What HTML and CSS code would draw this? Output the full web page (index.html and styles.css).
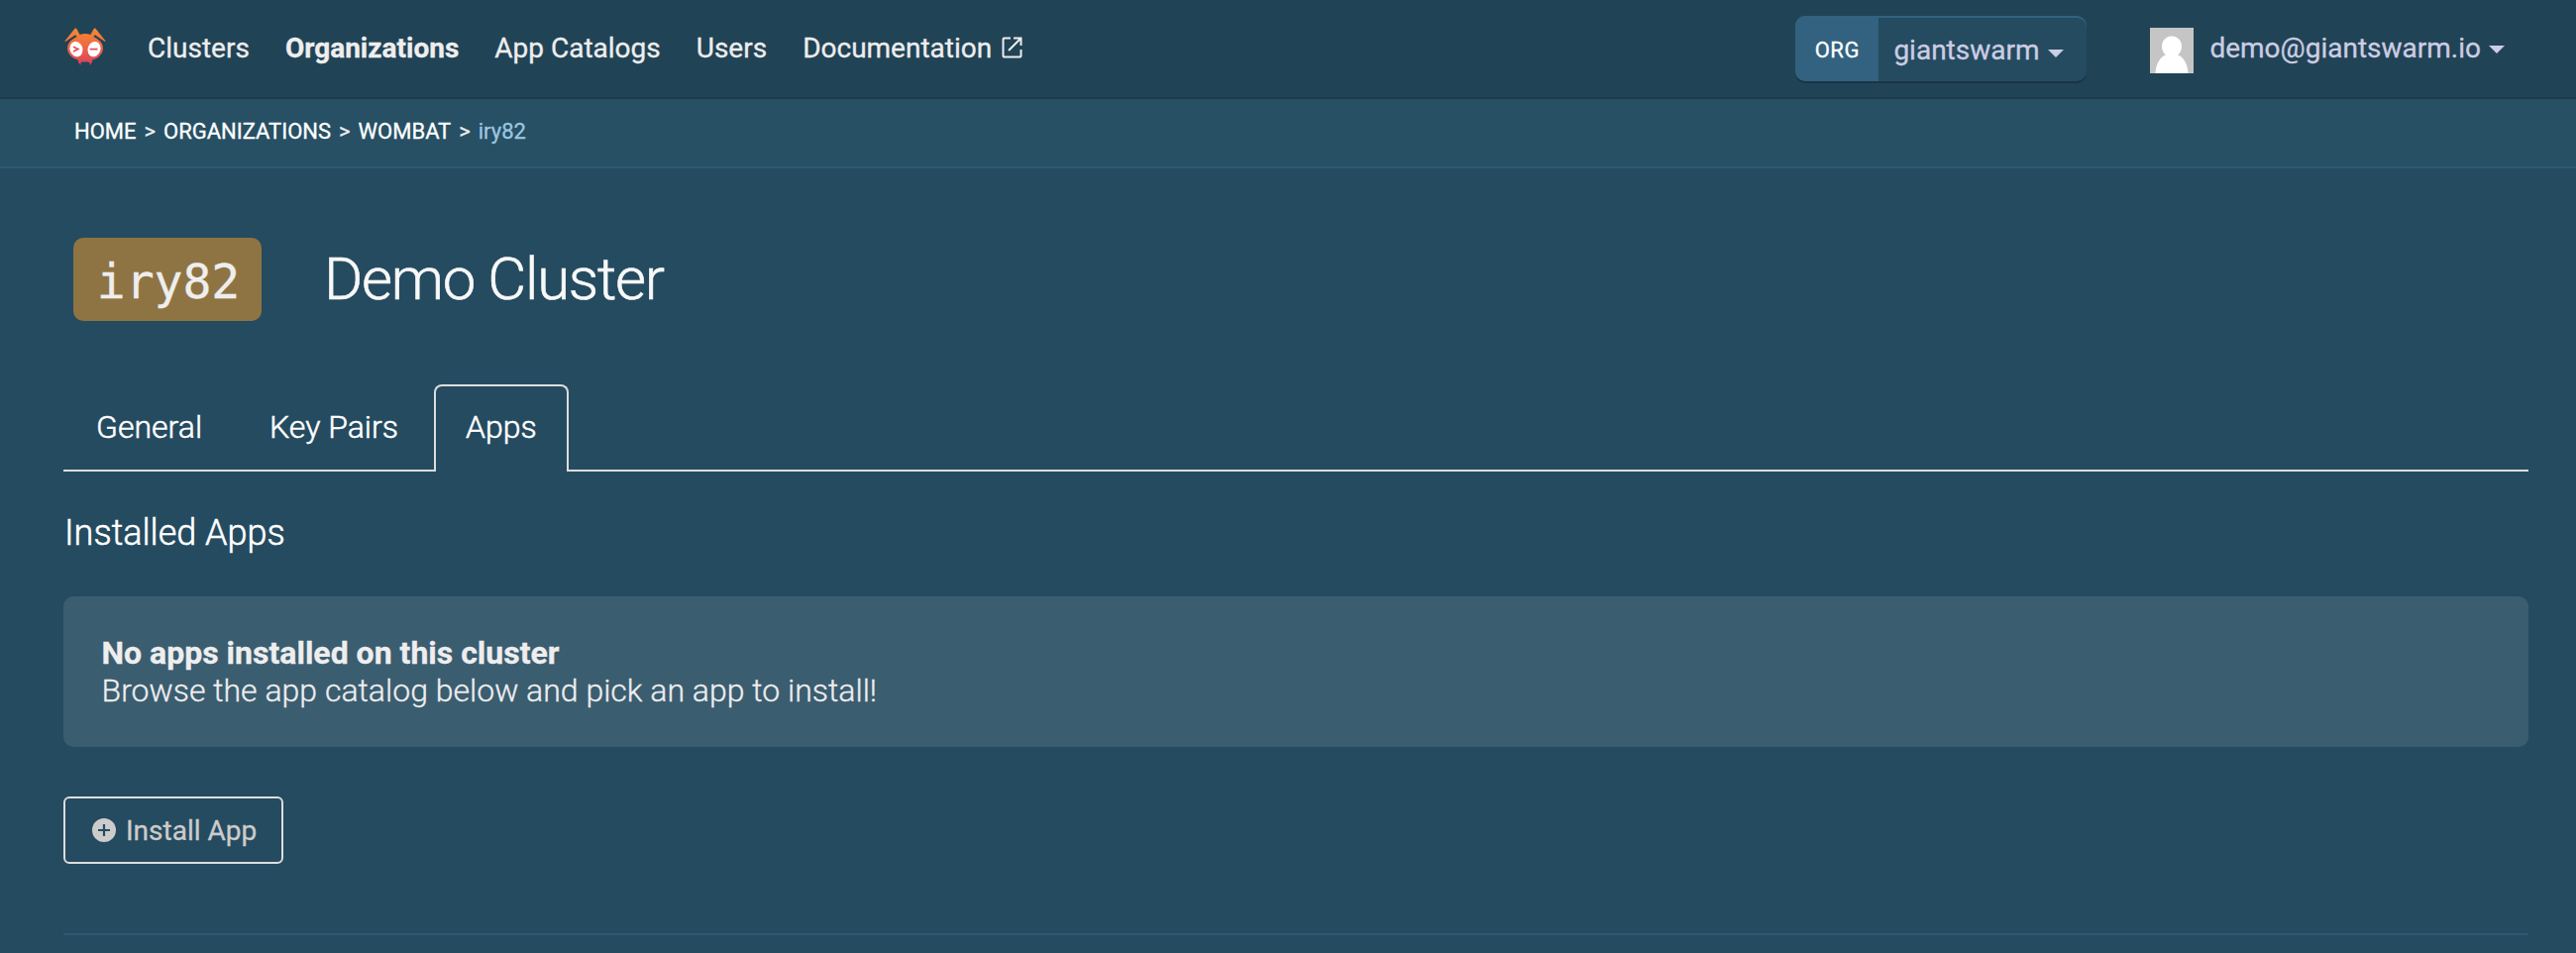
FILE: index.html
```html
<!DOCTYPE html>
<html lang="en">
<head>
<meta charset="utf-8">
<title>Demo Cluster</title>
<link rel="stylesheet" href="styles.css">
</head>
<body>
<header class="topbar">
  <svg class="logo" viewBox="0 0 42 38">
    <defs>
      <linearGradient id="ant" x1="0" y1="0" x2="0" y2="1">
        <stop offset="0" stop-color="#f68a2c"/>
        <stop offset=".45" stop-color="#ee6b45"/>
        <stop offset="1" stop-color="#d9405f"/>
      </linearGradient>
    </defs>
    <path fill="url(#ant)" d="M.3 13.6 10.8.6Q11.8 0 12.3 1L15.6 6.9Q21 5 26.400 6.900L29.700 1Q30.200 0 31.200.600L41.700 13.600 40.800 13.900 31 7.300 29.300 9Q39 13.500 39 20.500C39 27 33.500 31.200 28.500 32.300Q28.200 35.500 26 37.600Q25 37.700 25.600 35.300L23.500 34.400H18.500L16.400 35.300Q17 37.700 16 37.600Q13.800 35.500 13.500 32.300C8.500 31.200 3 27 3 20.500Q3 13.500 12.700 9L11 7.300 1.200 13.900Z"/>
    <ellipse cx="12" cy="21.600" rx="6.400" ry="7.800" fill="#fff" transform="rotate(-18 12 21.600)"/>
    <ellipse cx="30" cy="21.600" rx="6.400" ry="7.800" fill="#fff" transform="rotate(18 30 21.600)"/>
    <path d="M9 19.300 13.700 21.500 9 23.900M25.700 21.600h7.800" fill="none" stroke="#e14f57" stroke-width="1.700"/>
  </svg>
  <nav class="nav">
    <a>Clusters</a>
    <a class="current">Organizations</a>
    <a>App Catalogs</a>
    <a>Users</a>
    <a class="docs">Documentation
      <svg class="ext" viewBox="0 0 22 22" fill="none" stroke="#eee" stroke-width="2"><path d="M9 1.500H2.500Q1.500 1.500 1.500 2.500V19.500Q1.500 20.500 2.500 20.500H18.500Q19.500 20.500 19.500 19.500V13M12 1.500H19.500V9M19.500 1.500 7 14"/></svg>
    </a>
  </nav>
  <div class="org">
    <span class="org-tag">ORG</span>
    <span class="org-name">giantswarm<i class="caret"></i></span>
  </div>
  <div class="user">
    <svg class="avatar" viewBox="0 0 44 46"><path fill="#c5c5c5" d="M0 0h44v46H0z"/><path fill="#fff" d="M5.500 46C6 36 10.500 29.500 16 27.300A10 10.500 0 1 1 28 27.300C33.500 29.500 38 36 38.500 46Z"/></svg>
    <span class="email">demo@giantswarm.io</span><i class="caret"></i>
  </div>
</header>
<div class="crumbs">
  <a>HOME</a><span>&gt;</span><a>ORGANIZATIONS</a><span>&gt;</span><a>WOMBAT</a><span>&gt;</span><b>iry82</b>
</div>
<main class="page">
  <div class="title">
    <span class="badge">iry82</span>
    <h1>Demo Cluster</h1>
  </div>
  <div class="tabs">
    <a class="tab general">General</a>
    <a class="tab pairs">Key Pairs</a>
    <a class="tab active">Apps</a>
    <span class="rest"></span>
  </div>
  <h2>Installed Apps</h2>
  <section class="empty">
    <strong>No apps installed on this cluster</strong>
    <p>Browse the app catalog below and pick an app to install!</p>
  </section>
  <button class="install">
    <svg viewBox="0 0 24 24"><circle cx="12" cy="12" r="12" fill="#ccc"/><path d="M12 6v12M6 12h12" stroke="#254b60" stroke-width="2.200"/></svg>
    <span>Install App</span>
  </button>
  <hr>
</main>
</body>
</html>
```
FILE: styles.css
```css
* { box-sizing: border-box; }
body { margin: 0; height: 962px; overflow: hidden; background: #254b60; color: #eee; font-family: Roboto, "Liberation Sans", sans-serif; font-size: 28px; font-weight: 400; -webkit-text-stroke: .3px currentColor; }
a, span, b, strong { white-space: nowrap; }

.topbar { display: flex; align-items: flex-start; height: 100px; padding: 0 72px 0 65px; background: #214356; border-bottom: 2px solid #1e3c4e; }
.logo { width: 42px; height: 38px; margin-top: 28px; }
.nav { display: flex; gap: 36px; margin: 32px auto 0 42px; line-height: 33px; }
.current { font-weight: 700; }
.docs { display: flex; gap: 10px; }
.ext { width: 22px; height: 22px; margin-top: 5px; }

.org { display: flex; width: 294px; height: 66px; margin: 16px 64px 0 0; border-radius: 10px; background: #254b60; overflow: hidden; box-shadow: 0 2px 0 #1a3445, inset 0 2px 0 #32627f; }
.org-tag { width: 84px; background: #32627f; color: #fff; font-size: 22px; line-height: 69px; text-align: center; letter-spacing: .6px; }
.org-name { display: flex; padding-left: 15px; line-height: 70px; color: #cccde2; }
.caret { width: 0; height: 0; border: 8px solid transparent; border-top-color: #cccde2; border-bottom: 0; margin: 34px 0 0 8px; }

.user { display: flex; color: #cccde2; }
.avatar { width: 44px; height: 46px; margin: 28px 16px 0 0; }
.email { line-height: 33px; margin-top: 32px; }
.user .caret { margin-top: 46px; }

.crumbs { display: flex; height: 70px; padding-left: 75px; background: #275065; border-bottom: 2px solid #2c5972; font-size: 22px; line-height: 66px; color: #fff; }
.crumbs span { margin: 0 8px; font-size: 22px; color: #eee; }
.crumbs b { font-weight: 400; color: #9ec6e0; }

.page { padding: 70px 48px 0 64px; }
.title { display: flex; height: 84px; padding-left: 10px; }
.badge { width: 190px; padding-left: 2px; border-radius: 10px; background: #8f7443; font-family: "DejaVu Sans Mono", monospace; font-size: 48px; line-height: 88px; text-align: center; }
h1 { margin: 0 0 0 63px; font-size: 60px; font-weight: 300; line-height: 84px; letter-spacing: -1.3px; color: #f8f8f8; -webkit-text-stroke-width: .6px; }

.tabs { display: flex; height: 88px; margin-top: 64px; font-size: 32px; font-weight: 300; line-height: 86px; color: #fff; -webkit-text-stroke-width: .5px; }
.tab { padding-left: 33px; border-bottom: 2px solid #ddd; }
.general { width: 176px; }
.pairs { width: 198px; padding-left: 32px; }
.active { width: 136px; padding-left: 30px; border: 2px solid #ddd; border-bottom: 0; border-radius: 8px 8px 0 0; line-height: 82px; }
.rest { flex: 1; border-bottom: 2px solid #ddd; }

h2 { margin: 41px 0 0 1px; font-size: 36px; font-weight: 300; line-height: 42px; color: #fff; -webkit-text-stroke-width: .5px; }
.empty { height: 152px; margin-top: 43px; padding: 38px 38.500px; border-radius: 10px; background: #3b5d70; font-size: 32px; line-height: 38px; font-weight: 300; }
.empty strong { font-weight: 700; }
.empty p { margin: 0; }

.install { display: flex; align-items: center; width: 222px; height: 68px; margin-top: 50px; padding: 0 0 0 27px; gap: 10px; border: 2px solid #ddd; border-radius: 6px; background: none; color: #ccc; font: inherit; }
.install svg { width: 24px; height: 24px; }
hr { margin: 70px 0 0; border: 0; height: 2px; background: #2c5972; }
```
